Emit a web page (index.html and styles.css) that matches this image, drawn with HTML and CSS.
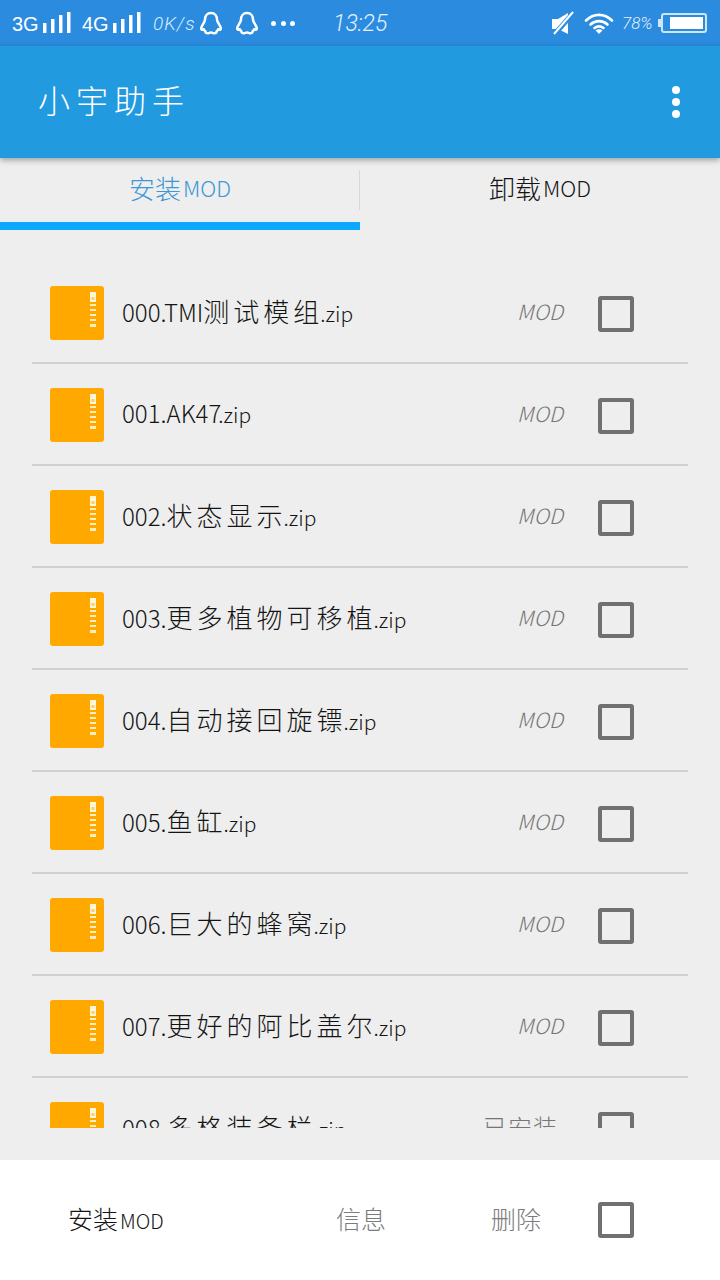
FILE: index.html
```html
<!DOCTYPE html>
<html lang="zh-CN">
<head>
    <meta charset="UTF-8">
    <title>小宇助手</title>
    <link rel="stylesheet" href="styles.css">
</head>
<body>

<svg class="defs" width="0" height="0">
    <symbol id="zip" viewBox="0 0 54 54">
        <rect width="54" height="54" rx="3" fill="#ffa800"/>
        <rect x="40" y="6" width="6" height="10" fill="#fff6dc"/>
        <rect x="41.500" y="11" width="3" height="3" fill="#ffcf60"/>
        <rect x="40" y="18" width="6" height="2" fill="#ffeec0"/>
        <rect x="40" y="23" width="6" height="2" fill="#ffeec0"/>
        <rect x="40" y="28" width="6" height="2" fill="#ffeec0"/>
        <rect x="40" y="33" width="6" height="2" fill="#ffeec0"/>
        <rect x="40" y="38" width="6" height="3" fill="#ffeec0"/>
    </symbol>
    <symbol id="penguin" viewBox="0 0 24 24">
        <path d="M12 2C8 2 6 5 6 8.500c0 2.500-3.200 5.500-3.800 8.500-.3 1.800.8 2.200 2.600 1.200.4.900 1 1.600 1.700 2.200-.3 1.500 1.200 2.100 2.800 1.800 1-.2 1.700-.7 2.700-.7s1.700.5 2.700.7c1.600.3 3.100-.3 2.800-1.800.7-.6 1.300-1.300 1.700-2.200 1.800 1 2.900.6 2.600-1.200C21.200 14 18 11 18 8.500 18 5 16 2 12 2z" fill="none" stroke="#fff" stroke-width="2.500" stroke-linejoin="round"/>
    </symbol>
</svg>

<div class="status-bar">
    <span class="net">3G</span>
    <svg class="signal" width="28" height="22" viewBox="0 0 28 22"><rect x="0" y="11" width="3.500" height="10" fill="#fff"/><rect x="8" y="7" width="3.500" height="14" fill="#fff"/><rect x="16" y="3" width="3.500" height="18" fill="#fff"/><rect x="24" y="0" width="3.500" height="21" fill="#fff"/></svg>
    <span class="net net-second">4G</span>
    <svg class="signal" width="28" height="22" viewBox="0 0 28 22"><rect x="0" y="11" width="3.500" height="10" fill="#fff"/><rect x="8" y="7" width="3.500" height="14" fill="#fff"/><rect x="16" y="3" width="3.500" height="18" fill="#fff"/><rect x="24" y="0" width="3.500" height="21" fill="#fff"/></svg>
    <span class="speed">0K/s</span>
    <svg class="qq" width="24" height="24"><use href="#penguin"/></svg>
    <svg class="qq qq-second" width="24" height="24"><use href="#penguin"/></svg>
    <span class="more-dots"><i></i><i></i><i></i></span>
    <span class="time">13:25</span>
    <span class="status-right">
        <svg width="24" height="24" viewBox="0 0 24 24"><path d="M1 8h6l10-6v21L7 18H1z" fill="#fff"/><path d="M3 24L23 1" stroke="#2b8bdf" stroke-width="5"/><path d="M3 23L22 1" stroke="#fff" stroke-width="2"/></svg>
        <svg class="wifi" width="30" height="22" viewBox="0 0 30 22"><path d="M2 8.500C9.500 1 20.500 1 28 8.500M6.500 12.500c5-4.500 12-4.500 17 0M10.500 16c3-2.200 6-2.200 9 0" fill="none" stroke="#fff" stroke-width="2.600" stroke-linecap="round"/><path d="M15 22l-3.500-3.800c2-1.300 5-1.300 7 0z" fill="#fff"/></svg>
        <span class="percent">78%</span>
        <span class="battery-tip"></span>
        <span class="battery"><span class="battery-level"></span></span>
    </span>
</div>

<header class="app-bar">
    <div class="app-title">小宇助手</div>
    <div class="menu-dots"><i></i><i></i><i></i></div>
</header>

<nav class="tabs">
    <div class="tab tab-active">安装<span class="latin">MOD</span></div>
    <div class="tab">卸载<span class="latin">MOD</span></div>
</nav>

<main class="mod-list">
    <div class="mod-row">
        <svg class="zip-icon"><use href="#zip"/></svg>
        <div class="mod-name">000.TMI<span class="cn">测试模组</span><span class="ext">.zip</span></div>
        <div class="mod-state">MOD</div>
        <div class="check"></div>
    </div>
    <div class="mod-row">
        <svg class="zip-icon"><use href="#zip"/></svg>
        <div class="mod-name">001.AK47<span class="ext">.zip</span></div>
        <div class="mod-state">MOD</div>
        <div class="check"></div>
    </div>
    <div class="mod-row">
        <svg class="zip-icon"><use href="#zip"/></svg>
        <div class="mod-name">002.<span class="cn">状态显示</span><span class="ext">.zip</span></div>
        <div class="mod-state">MOD</div>
        <div class="check"></div>
    </div>
    <div class="mod-row">
        <svg class="zip-icon"><use href="#zip"/></svg>
        <div class="mod-name">003.<span class="cn">更多植物可移植</span><span class="ext">.zip</span></div>
        <div class="mod-state">MOD</div>
        <div class="check"></div>
    </div>
    <div class="mod-row">
        <svg class="zip-icon"><use href="#zip"/></svg>
        <div class="mod-name">004.<span class="cn">自动接回旋镖</span><span class="ext">.zip</span></div>
        <div class="mod-state">MOD</div>
        <div class="check"></div>
    </div>
    <div class="mod-row">
        <svg class="zip-icon"><use href="#zip"/></svg>
        <div class="mod-name">005.<span class="cn">鱼缸</span><span class="ext">.zip</span></div>
        <div class="mod-state">MOD</div>
        <div class="check"></div>
    </div>
    <div class="mod-row">
        <svg class="zip-icon"><use href="#zip"/></svg>
        <div class="mod-name">006.<span class="cn">巨大的蜂窝</span><span class="ext">.zip</span></div>
        <div class="mod-state">MOD</div>
        <div class="check"></div>
    </div>
    <div class="mod-row">
        <svg class="zip-icon"><use href="#zip"/></svg>
        <div class="mod-name">007.<span class="cn">更好的阿比盖尔</span><span class="ext">.zip</span></div>
        <div class="mod-state">MOD</div>
        <div class="check"></div>
    </div>
    <div class="mod-row">
        <svg class="zip-icon"><use href="#zip"/></svg>
        <div class="mod-name">008.<span class="cn">多格装备栏</span><span class="ext">.zip</span></div>
        <div class="mod-state mod-state-cn">已安装</div>
        <div class="check"></div>
    </div>
</main>

<footer class="bottom-bar">
    <div class="bottom-install">安装<span class="latin">MOD</span></div>
    <div class="bottom-action">信息</div>
    <div class="bottom-action">删除</div>
    <div class="check"></div>
</footer>

</body>
</html>
```

FILE: styles.css
```css
* {
    box-sizing: border-box;
}

html, body {
    margin: 0;
    padding: 0;
}

body {
    width: 720px;
    height: 1280px;
    overflow: hidden;
    position: relative;
    background-color: #eeeeee;
    font-family: "Noto Sans CJK SC", "Noto Sans", sans-serif;
    font-weight: 300;
    color: #141414;
}

.defs {
    display: block;
    height: 0;
}

/* Barre d'état */
.status-bar {
    height: 46px;
    padding-left: 12px;
    display: flex;
    align-items: center;
    background-color: #2b8bdf;
    color: #fff;
}

.net {
    font-family: "Liberation Sans", sans-serif;
    font-size: 20px;
    width: 31px;
    padding-top: 2px;
}

.net-second {
    margin-left: 11px;
}

.signal {
    flex-shrink: 0;
}

.speed {
    margin-left: 12px;
    width: 46px;
    font-family: Roboto, sans-serif;
    font-size: 19px;
    font-weight: 300;
    font-style: italic;
    letter-spacing: 1px;
    color: #d8ecfb;
}

.qq-second {
    margin-left: 12px;
}

.more-dots {
    margin-left: 12px;
    width: 24px;
    display: flex;
    justify-content: space-between;
}

.more-dots i {
    width: 5px;
    height: 5px;
    border-radius: 50%;
    background-color: #fff;
}

.time {
    margin-left: 38px;
    font-family: Roboto, sans-serif;
    font-size: 23px;
    font-weight: 300;
    font-style: italic;
    color: #e4f1fc;
}

.status-right {
    margin-left: auto;
    padding-right: 13px;
    display: flex;
    align-items: center;
}

.wifi {
    margin-left: 9px;
}

.percent {
    margin-left: 8px;
    width: 36px;
    font-family: Roboto, sans-serif;
    font-size: 17px;
    font-weight: 300;
    font-style: italic;
    color: #e4f1fc;
}

.battery-tip {
    width: 3px;
    height: 8px;
    background-color: #cfe6f8;
}

.battery {
    width: 46px;
    height: 20px;
    padding: 2px;
    display: flex;
    justify-content: flex-end;
    border: 2px solid #cfe6f8;
    border-radius: 3px;
}

.battery-level {
    width: 33px;
    background-color: #fff;
}

/* Barre de titre */
.app-bar {
    height: 112px;
    padding: 0 40px 0 38px;
    display: flex;
    align-items: center;
    justify-content: space-between;
    background-color: #229ae0;
    color: #fff;
    box-shadow: 0 2px 6px rgba(0, 0, 0, 0.35);
    position: relative;
}

.app-title {
    font-size: 32px;
    letter-spacing: 6px;
    padding-bottom: 6px;
}

.menu-dots {
    display: flex;
    flex-direction: column;
    gap: 4px;
}

.menu-dots i {
    width: 8px;
    height: 8px;
    border-radius: 50%;
    background-color: #fff;
}

/* Onglets */
.tabs {
    height: 72px;
    display: flex;
}

.tab {
    width: 360px;
    height: 72px;
    padding-bottom: 14px;
    display: flex;
    align-items: center;
    justify-content: center;
    font-size: 26px;
}

.latin {
    font-size: 22px;
    margin-left: 2px;
}

.tab-active {
    color: #3c97d6;
    border-bottom: 8px solid #0aa9ff;
    padding-bottom: 6px;
    position: relative;
}

.tab-active::after {
    content: "";
    position: absolute;
    right: 0;
    top: 12px;
    height: 40px;
    width: 1px;
    background-color: #d8d8d8;
}

/* Liste des mods */
.mod-list {
    height: 866px;
    margin-top: 32px;
    margin-left: 32px;
    width: 656px;
    overflow: hidden;
}

.mod-row {
    height: 102px;
    padding: 24px 54px 22px 18px;
    display: flex;
    align-items: center;
    border-bottom: 2px solid #d0d0d0;
}

.zip-icon {
    width: 54px;
    height: 54px;
    flex-shrink: 0;
}

.mod-name {
    margin-left: 18px;
    padding-bottom: 5px;
    flex: 1;
    font-size: 24px;
    white-space: nowrap;
}

.cn {
    font-size: 26px;
    letter-spacing: 4px;
}

.ext {
    font-size: 21px;
    margin-left: -3px;
}

.mod-state {
    margin-right: 35px;
    padding-bottom: 5px;
    font-size: 21px;
    font-style: italic;
    color: #767676;
}

.mod-state-cn {
    margin-right: 40px;
    font-size: 24px;
    font-style: normal;
    letter-spacing: 1px;
}

.check {
    width: 36px;
    height: 36px;
    flex-shrink: 0;
    border: 4px solid #707070;
    border-radius: 3px;
}

.mod-row .check {
    margin-top: 2px;
}

/* Barre du bas */
.bottom-bar {
    position: absolute;
    left: 0;
    right: 0;
    bottom: 0;
    height: 120px;
    padding-left: 68px;
    display: grid;
    grid-template-columns: 268px 155px 107px 36px;
    align-items: center;
    background-color: #fff;
    font-size: 25px;
}

.bottom-install,
.bottom-action {
    padding-bottom: 4px;
}

.bottom-install .latin {
    font-size: 20px;
}

.bottom-action {
    color: #7c7c7c;
}
```
